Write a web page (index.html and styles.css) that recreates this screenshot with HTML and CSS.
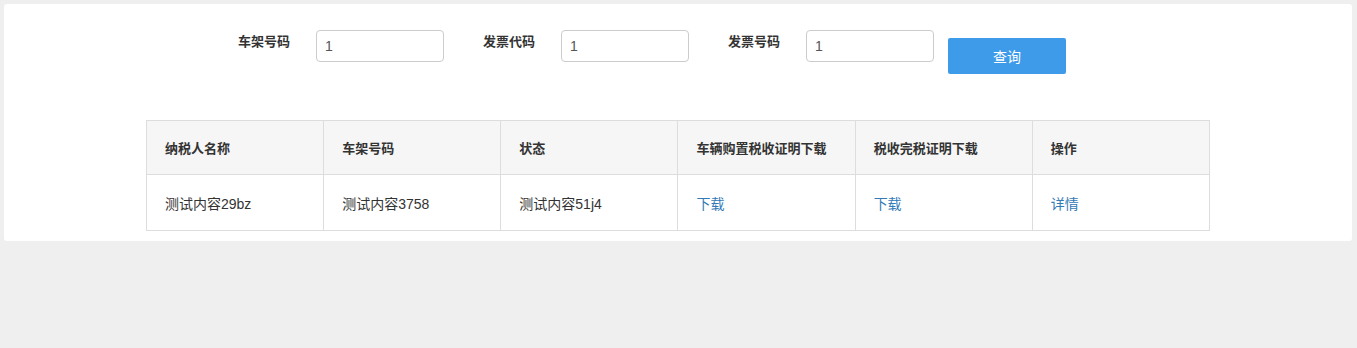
FILE: index.html
```html
<!DOCTYPE html>
<html lang="zh-CN">
<head>
    <meta charset="UTF-8">
    <meta name="viewport" content="width=device-width, initial-scale=1.0">
    <title>车辆购置税查询</title>
    <link rel="stylesheet" href="styles.css">
</head>
<body>
    <div class="panel">
        <div class="search-form">
            <div class="form-group">
                <label class="form-label">车架号码</label>
                <input class="form-input" type="text" value="1">
            </div>
            <div class="form-group">
                <label class="form-label">发票代码</label>
                <input class="form-input" type="text" value="1">
            </div>
            <div class="form-group">
                <label class="form-label">发票号码</label>
                <input class="form-input" type="text" value="1">
            </div>
            <button class="btn-search">查询</button>
        </div>

        <table class="result-table">
            <thead>
                <tr>
                    <th>纳税人名称</th>
                    <th>车架号码</th>
                    <th>状态</th>
                    <th>车辆购置税收证明下载</th>
                    <th>税收完税证明下载</th>
                    <th>操作</th>
                </tr>
            </thead>
            <tbody>
                <tr>
                    <td>测试内容29bz</td>
                    <td>测试内容3758</td>
                    <td>测试内容51j4</td>
                    <td><a href="#">下载</a></td>
                    <td><a href="#">下载</a></td>
                    <td><a href="#">详情</a></td>
                </tr>
            </tbody>
        </table>
    </div>
</body>
</html>
```

FILE: styles.css
```css
body {
    margin: 0;
    padding: 4px 5px 4px 4px;
    background-color: #efefef;
    font-family: "Liberation Sans", "Noto Sans CJK SC", Arial, sans-serif;
    font-size: 14px;
    color: #333;
}
.panel {
    background: #fff;
    border-radius: 3px;
    padding: 26px 0 10px;
}
.search-form {
    display: flex;
    align-items: flex-start;
    padding-left: 234px;
}
.form-group {
    display: flex;
    align-items: flex-start;
    margin-right: 39px;
}
.form-group:last-of-type {
    margin-right: 14px;
}
.form-label {
    width: 52px;
    margin-top: 3px;
    margin-right: 26px;
    font-size: 13px;
    font-weight: bold;
    line-height: 18px;
    color: #333;
}
.form-input {
    box-sizing: border-box;
    width: 128px;
    height: 32px;
    padding: 0 8px;
    border: 1px solid #ccc;
    border-radius: 4px;
    font-family: "Liberation Sans", Arial, sans-serif;
    font-size: 14px;
    color: #555;
    outline: none;
}
.btn-search {
    width: 118px;
    height: 36px;
    margin-top: 8px;
    border: none;
    border-radius: 2px;
    background-color: #3d9be9;
    color: #fff;
    font-family: "Noto Sans CJK SC", sans-serif;
    font-size: 14px;
    cursor: pointer;
}
.result-table {
    width: 1064px;
    margin: 46px 0 0 142px;
    border-collapse: collapse;
    table-layout: fixed;
}
.result-table th,
.result-table td {
    border: 1px solid #ddd;
    padding: 0 18px;
    text-align: left;
    vertical-align: middle;
}
.result-table th {
    height: 53px;
    background-color: #f6f6f6;
    font-size: 13px;
    font-weight: bold;
    color: #333;
}
.result-table td {
    height: 55px;
    font-size: 14px;
    color: #333;
}
.result-table a {
    color: #337ab7;
    text-decoration: none;
}
```
